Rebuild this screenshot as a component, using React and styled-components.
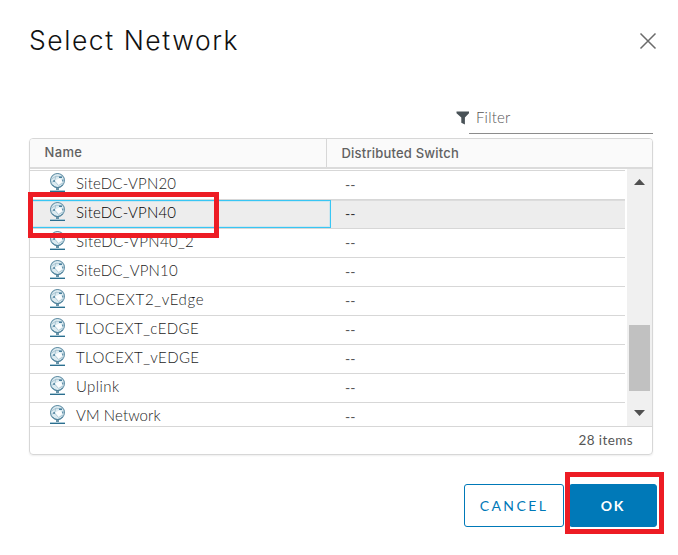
import React from 'react';
import styled, { createGlobalStyle } from 'styled-components';

const Global = createGlobalStyle`
  * { box-sizing: border-box; }
  body { margin: 0; background: #fff; font-family: Lato, "Liberation Sans", sans-serif; color: #565656; overflow: hidden; }
`;
const Dialog = styled.main`
  position: relative; width: 678px; height: 555px; padding: 0 25px 0 29px;
  display: flex; flex-direction: column; background: #fff;
`;
const Header = styled.header`
  display: flex; justify-content: space-between; height: 105px; padding-top: 23px;
`;
const Title = styled.h1`
  margin: 0; font: 300 26.5px/34px Inter, sans-serif; letter-spacing: ${p => p.$ls}px; color: #111; white-space: nowrap;
`;
const Close = styled.button`
  width: 18px; height: 18px; margin: 9px -4px 0 0; padding: 0; border: 0; background: none;
  svg { display: block; }
`;
const FilterBar = styled.div`
  display: flex; align-self: flex-end; height: 33px; width: 197px;
  svg { flex: none; margin-top: 6px; }
`;
const FilterField = styled.div`
  flex: 1; height: 29px; padding-left: 7px; border-bottom: 1px solid #8c8c8c;
  font-size: 15px; font-weight: 300; line-height: 25px; color: #555; letter-spacing: 0.2px;
`;
const Grid = styled.section`
  width: 624px; height: 317px; border: 1px solid #d7d7d7; border-radius: 4px;
  box-shadow: 0 1px 2px #eee; display: flex; flex-direction: column; overflow: hidden;
`;
const Head = styled.div`
  flex: none; display: grid; grid-template-columns: 297px 1fr; height: 30px;
  background: #fafafa; border-bottom: 2px solid #dbdbdb;
`;
const HeadCell = styled.div`
  padding: ${p => p.$top}px 0 0 14.5px; font: 500 13px/16px Inter, sans-serif; letter-spacing: ${p => p.$ls}px;
  color: #616161; border-right: ${p => (p.$divider ? '1px solid #d7d7d7' : '0')};
`;
const Body = styled.div`
  flex: none; display: flex; height: 257px; justify-content: space-between;
`;
const Rows = styled.div`
  width: 595px; height: 257px; padding-top: 1px; overflow: hidden;
`;
const Row = styled.div`
  display: grid; grid-template-columns: 301px 1fr; height: 29px; border-top: 1px solid #d7d7d7;
  background: ${p => (p.$selected ? '#ededed' : '#fff')};
  box-shadow: ${p => (p.$selected ? 'inset 0 1px 0 #dcdcdc' : 'none')};
  color: ${p => (p.$selected ? '#000' : '#1c1c1c')};
`;
const NameCell = styled.div`
  display: flex; height: 28px; padding: 1px 0 0 19px; border: 1px solid ${p => (p.$selected ? '#38c6f4' : 'transparent')};
  box-shadow: ${p => (p.$selected ? 'inset 0 0 0 1px #cfe6ee' : 'none')};
  svg { flex: none; }
`;
const Label = styled.span`
  margin-left: 10px; font-size: 15px; font-weight: 300; line-height: 21px; letter-spacing: ${p => p.$ls}px; white-space: nowrap;
`;
const SwitchCell = styled.div`
  padding: 4px 0 0 14px; font-size: 14px; line-height: 20px; color: ${p => (p.$selected ? '#313131' : '#565656')};
`;
const Scrollbar = styled.div`
  width: 25px; padding: 10px 2px 0; background: #f0f0f0; display: flex; flex-direction: column; align-items: center;
`;
const Thumb = styled.div`
  width: 21px; height: 66px; margin: 140px 0 19px; background: #c1c1c1;
`;
const Footer = styled.div`
  flex: 1; border-top: 1px solid #d7d7d7; padding: 4px 19px 0 0; text-align: right;
  font-size: 13.5px; line-height: 18px; letter-spacing: ${p => p.$ls}px;
`;
const Actions = styled.footer`
  display: flex; gap: 5px; justify-content: flex-end; margin: 29px -4px 0 0;
`;
const Button = styled.button`
  width: ${p => p.$w}px; height: 43px; padding: 1px 0 0; border: 1px solid #0079b8; border-radius: 3px;
  background: ${p => (p.$primary ? '#0079b8' : '#fff')}; color: ${p => (p.$primary ? '#fff' : '#0079b8')};
  font: ${p => (p.$primary ? 700 : 400)} 14px/18px Lato, sans-serif; letter-spacing: ${p => p.$ls}px;
`;
const Highlight = styled.div`
  position: absolute; left: ${p => p.$x}px; top: ${p => p.$y}px; width: ${p => p.$w}px; height: ${p => p.$h}px;
  border: 5px solid #ed1c24; pointer-events: none;
`;

const NetworkIcon = () => (
  <svg width="16" height="20" viewBox="0 0 16 20">
    <circle cx="7.5" cy="7.5" r="7" fill="#dcebf1" stroke="#6b96ab" strokeWidth="1.1" />
    <path d="M1.5 6 6 3.2l5.5.6M6 3.2 4.5 8 1 9.5M4.5 8l4 4.3 4.7-2.3" fill="none" stroke="#9ebccb" strokeWidth=".8" />
    <path d="m5 7.6 4.8-2.3 2.9 3.2-4 3.4z" fill="#fff" opacity=".9" />
    <path d="M9 3.5h3v1.6H9zM3.2 7.2h1.8v1.6H3.2zM12.2 6.6h1.2v2h-1.2z" fill="#477e9b" />
    <path d="M2.3 11.8c2.4 3.6 8 3.6 10.4 0" fill="none" stroke="#497e98" />
    <path d="M0 17h15v1H0z" fill="#a9c9d7" /><path d="M0 18h15v1H0z" fill="#2c6e8e" />
    <path d="M6 15h3v2H6z" fill="#6893a8" />
  </svg>
);

const networks = [
  ['SiteDC-VPN20', 0.2], ['SiteDC-VPN40', 0.2], ['SiteDC-VPN40_2', 0.35], ['SiteDC_VPN10', 0.2],
  ['TLOCEXT2_vEdge', 0.65], ['TLOCEXT_cEDGE', 0.4], ['TLOCEXT_vEDGE', 0.4], ['Uplink', 0.4], ['VM Network', 0.1],
];

export default function App() {
  return (
    <Dialog>
      <Global />
      <Header>
        <Title $ls={1.55}>Select Network</Title>
        <Close aria-label="Close">
          <svg width="18" height="18"><path d="m1.5 1.5 15 15m0-15-15 15" stroke="#6b6b6b" strokeWidth="1.5" /></svg>
        </Close>
      </Header>
      <FilterBar>
        <svg width="13" height="14"><path d="M.5.5H13v1.8L8.9 6.5v7L5.3 11.7V6.5L.5 2.3z" fill="#495257" /></svg>
        <FilterField>Filter</FilterField>
      </FilterBar>
      <Grid>
        <Head>
          <HeadCell $divider $top={5} $ls={0.35}>Name</HeadCell>
          <HeadCell $top={6} $ls={0.2}>Distributed Switch</HeadCell>
        </Head>
        <Body>
          <Rows>
            {networks.map(([name, ls], i) => (
              <Row key={name} $selected={i === 1}>
                <NameCell $selected={i === 1}><NetworkIcon /><Label $ls={ls}>{name}</Label></NameCell>
                <SwitchCell $selected={i === 1}>--</SwitchCell>
              </Row>
            ))}
          </Rows>
          <Scrollbar>
            <svg width="11" height="6"><path d="M0 6 5.5 0 11 6z" fill="#505050" /></svg>
            <Thumb />
            <svg width="11" height="6"><path d="M0 0h11L5.5 6z" fill="#505050" /></svg>
          </Scrollbar>
        </Body>
        <Footer $ls={0.4}>28 items</Footer>
      </Grid>
      <Actions>
        <Button $w={100} $ls={2.4}>CANCEL</Button>
        <Button $w={88} $ls={1.8} $primary>OK</Button>
      </Actions>
      <Highlight $x={28} $y={192} $w={191} $h={46} />
      <Highlight $x={565} $y={472} $w={99} $h={62} />
    </Dialog>
  );
}
